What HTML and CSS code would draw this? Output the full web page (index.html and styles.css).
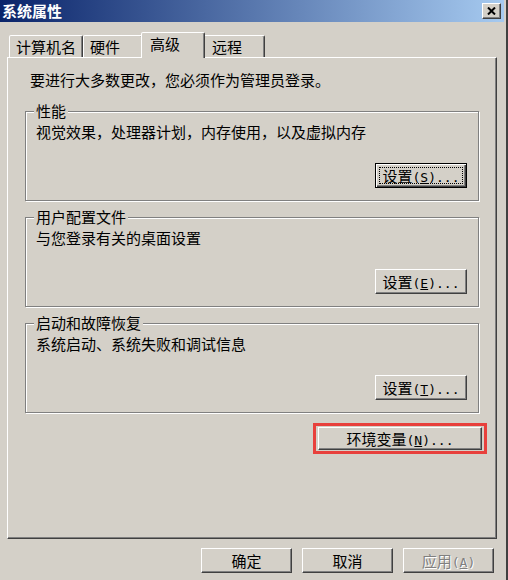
FILE: index.html
```html
<!DOCTYPE html>
<html lang="zh-CN">
<head>
  <meta charset="UTF-8" />
  <meta name="viewport" content="width=device-width, initial-scale=1.0" />
  <title>系统属性</title>
  <link rel="stylesheet" href="styles.css">
</head>
<body>

  <div class="window">
    <div class="titlebar">
      <span class="title">系统属性</span>
      <button class="close" aria-label="关闭">
        <svg width="9" height="8" viewBox="0 0 9 8"><path d="M1 0.5L8 7.5M8 0.5L1 7.5" stroke="#000" stroke-width="2"/></svg>
      </button>
    </div>

    <div class="dialog">
      <div class="tabs">
        <div class="tab tab-name">计算机名</div>
        <div class="tab tab-hw">硬件</div>
        <div class="tab tab-adv selected">高级</div>
        <div class="tab tab-remote">远程</div>
      </div>

      <div class="panel">
        <p class="note">要进行大多数更改，您必须作为管理员登录。</p>

        <fieldset class="group first">
          <legend>性能</legend>
          <p>视觉效果，处理器计划，内存使用，以及虚拟内存</p>
          <div class="actions">
            <button class="btn focused">设置<span class="key">(<u>S</u>)...</span></button>
          </div>
        </fieldset>

        <fieldset class="group">
          <legend>用户配置文件</legend>
          <p>与您登录有关的桌面设置</p>
          <div class="actions">
            <button class="btn">设置<span class="key">(<u>E</u>)...</span></button>
          </div>
        </fieldset>

        <fieldset class="group">
          <legend>启动和故障恢复</legend>
          <p>系统启动、系统失败和调试信息</p>
          <div class="actions">
            <button class="btn">设置<span class="key">(<u>T</u>)...</span></button>
          </div>
        </fieldset>

        <div class="env-row">
          <span class="highlight">
            <button class="btn env">环境变量<span class="key">(<u>N</u>)...</span></button>
          </span>
        </div>
      </div>

      <div class="footer">
        <button class="btn">确定</button>
        <button class="btn">取消</button>
        <button class="btn disabled">应用<span class="key">(<u>A</u>)</span></button>
      </div>
    </div>
  </div>

</body>
</html>
```

FILE: styles.css
```css
:root {
  --face: #d4d0c8;
  --shadow: #808080;
  --dark: #404040;
  --light: #ffffff;
  --font: "Noto Sans CJK SC", sans-serif;
}

body {
  margin: 0;
  background: var(--face);
  font-family: var(--font);
  font-size: 15px;
  color: #000;
}

.window {
  width: 508px;
  height: 580px;
  box-sizing: border-box;
  border-right: 2px solid var(--dark);
  padding-right: 2px;
}

/* title bar */
.titlebar {
  height: 22px;
  display: flex;
  align-items: center;
  justify-content: space-between;
  padding: 0 3px 0 2px;
  background: linear-gradient(to right, #0a246a, #a6caf0);
}

.title {
  color: #fff;
  font-weight: bold;
  font-size: 15px;
  line-height: 22px;
}

.close {
  width: 19px;
  height: 16px;
  padding: 0;
  display: flex;
  align-items: center;
  justify-content: center;
  background: var(--face);
  border: 1px solid;
  border-color: var(--light) var(--dark) var(--dark) var(--light);
  box-shadow: inset -1px -1px var(--shadow);
}

/* body of the dialog */
.dialog {
  padding: 10px 7px 0 7px;
}

.tabs {
  display: flex;
  align-items: flex-end;
  padding-left: 2px;
  height: 25px;
}

.tab {
  box-sizing: border-box;
  height: 22px;
  padding: 2px 0 0 6px;
  line-height: 18px;
  background: var(--face);
  border: 1px solid;
  border-bottom: none;
  border-color: var(--light) var(--dark) transparent var(--light);
  border-radius: 2px 2px 0 0;
  box-shadow: inset -1px 0 var(--shadow);
  white-space: nowrap;
}

.tab-name { width: 74px; }
.tab-hw { width: 60px; }
.tab-adv { width: 64px; }
.tab-remote { width: 62px; padding-left: 8px; }

.tab.selected {
  position: relative;
  z-index: 1;
  height: 26px;
  margin: 0 -2px -1px -2px;
  padding-left: 8px;
}

.panel {
  box-sizing: border-box;
  height: 482px;
  padding: 13px 17px 0 17px;
  border: 1px solid;
  border-color: var(--light) var(--dark) var(--dark) var(--light);
  box-shadow: inset -1px -1px var(--shadow);
}

.note {
  margin: 0 0 0 5px;
  line-height: 18px;
}

/* group boxes */
.group {
  margin: 7px 0 0 0;
  padding: 3px 11px 12px 10px;
  min-width: 0;
  border: 1px solid var(--shadow);
  box-shadow: 1px 1px 0 var(--light), inset 1px 1px 0 var(--light);
}

.group.first {
  margin-top: 13px;
}

.group legend {
  padding: 0 2px;
  margin-left: -2px;
  line-height: 18px;
  background: var(--face);
}

.group p {
  margin: 0;
  line-height: 18px;
}

.actions {
  display: flex;
  justify-content: flex-end;
  margin-top: 22px;
}

/* buttons */
.btn {
  box-sizing: border-box;
  width: 92px;
  height: 25px;
  padding: 0;
  font-family: var(--font);
  font-size: 15px;
  line-height: 1;
  color: #000;
  background: var(--face);
  border: 1px solid;
  border-color: var(--light) var(--dark) var(--dark) var(--light);
  box-shadow: inset -1px -1px var(--shadow);
  white-space: nowrap;
}

.btn .key {
  font-family: "DejaVu Sans Mono", monospace;
  font-size: 13px;
}

.btn.focused {
  border-color: #000;
  box-shadow: inset 1px 1px var(--light), inset -1px -1px var(--dark), inset -2px -2px var(--shadow);
  outline: 1px dotted #000;
  outline-offset: -5px;
}

.env-row {
  display: flex;
  justify-content: flex-end;
  margin: 10px -8px 0 0;
}

.highlight {
  display: flex;
  padding: 1px 2px;
  border: 3px solid #e8403c;
}

.btn.env {
  width: 164px;
  height: 23px;
}

.footer {
  display: flex;
  justify-content: flex-end;
  gap: 10px;
  margin-top: 9px;
  padding-right: 3px;
}

.footer .btn {
  width: 91px;
}

.btn.disabled {
  color: var(--shadow);
  text-shadow: 1px 1px 0 var(--light);
}
```
